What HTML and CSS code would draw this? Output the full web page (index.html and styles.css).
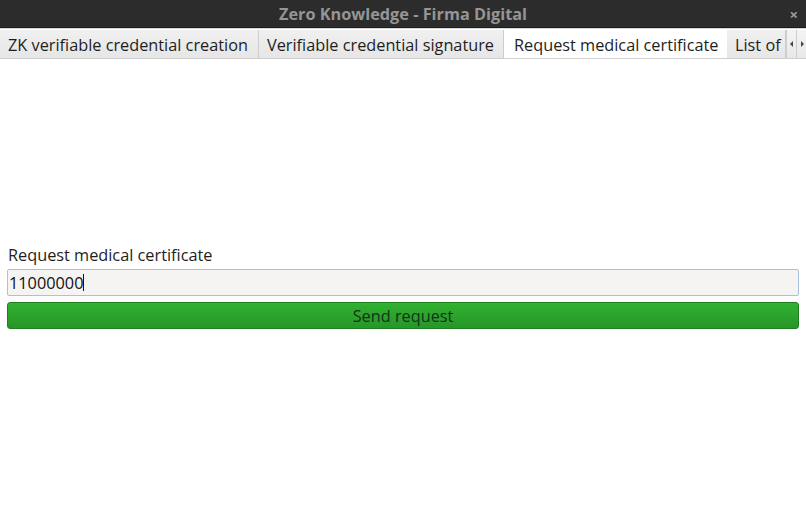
FILE: index.html
```html
<!DOCTYPE html>
<html>
<head>
<meta charset="utf-8">
<link rel="stylesheet" href="styles.css">
</head>
<body>
<div class="window">
  <div class="titlebar">
    <span class="title">Zero Knowledge - Firma Digital</span>
    <span class="close">×</span>
  </div>
  <div class="tabbar">
    <div class="tab t1">ZK verifiable credential creation</div>
    <div class="tab t2">Verifiable credential signature</div>
    <div class="tab t3 active">Request medical certificate</div>
    <div class="tab t4">List of</div>
    <div class="arrow">
      <svg width="6" height="8" viewBox="0 0 6 8"><path d="M4 1 L1 4 L4 7 Z" fill="#444"/></svg>
    </div>
    <div class="arrow">
      <svg width="6" height="8" viewBox="0 0 6 8"><path d="M2 1 L5 4 L2 7 Z" fill="#444"/></svg>
    </div>
  </div>
  <div class="content">
    <div class="label">Request medical certificate</div>
    <div class="input"><span>11000000</span><span class="caret"></span></div>
    <div class="button">Send request</div>
  </div>
</div>
</body>
</html>
```
FILE: styles.css
```css
html, body {
  margin: 0;
  padding: 0;
  background: #ffffff;
  font-family: "Open Sans", "Noto Sans", sans-serif;
}
.window {
  width: 806px;
  height: 508px;
  display: flex;
  flex-direction: column;
  background: #fff;
}
.titlebar {
  height: 28px;
  background: #2c2c2c;
  border-bottom: 1px solid #1c1c1c;
  display: flex;
  align-items: center;
  justify-content: center;
  position: relative;
  box-sizing: border-box;
}
.title {
  color: #959595;
  font-weight: bold;
  font-size: 16.3px;
}
.close {
  position: absolute;
  right: 8px;
  top: 4px;
  color: #9a9a9a;
  font-size: 15px;
  font-weight: bold;
}
.tabbar {
  height: 31px;
  display: flex;
  align-items: stretch;
  border-top: 1px solid #d8d8d8;
  border-bottom: 1px solid #cfcfcf;
  box-sizing: border-box;
  background: #ffffff;
  overflow: hidden;
}
.tab {
  display: flex;
  align-items: center;
  font-size: 16.3px;
  color: #1e1e1e;
  background: linear-gradient(#f0f0f0, #e6e6e6);
  border-right: 1px solid #cdcdcd;
  box-sizing: border-box;
  white-space: nowrap;
  overflow: hidden;
  padding-left: 8px;
  padding-top: 1px;
  margin-top: 1px;
}
.t1 { width: 259px; }
.t2 { width: 245px; }
.t3 { width: 223px; }
.t4 { width: 59px; }
.tab.active {
  background: #ffffff;
  margin-top: 0;
  margin-bottom: -1px;
  border-right: none;
  padding-left: 10px;
}
.arrow {
  width: 10px;
  display: flex;
  align-items: center;
  justify-content: center;
  background: linear-gradient(#f4f4f4, #e8e8e8);
  border-left: 1px solid #cdcdcd;
  box-sizing: border-box;
  margin-top: 1px;
}
.content {
  flex: 1;
  display: flex;
  flex-direction: column;
  padding: 185px 7px 0 7px;
}
.label {
  font-size: 16.3px;
  color: #1e1e1e;
  padding-left: 1px;
  height: 22px;
  line-height: 22px;
}
.input {
  margin-top: 3px;
  height: 27px;
  box-sizing: border-box;
  border: 1px solid #a9c1dc;
  border-radius: 2px;
  background: #f5f4f3;
  display: flex;
  align-items: center;
  font-size: 16.3px;
  color: #111;
  padding-left: 1px;
}
.caret {
  width: 1px;
  height: 17px;
  background: #111;
}
.button {
  margin-top: 6px;
  height: 27px;
  box-sizing: border-box;
  border: 1px solid #1f7f1f;
  border-radius: 3px;
  background: linear-gradient(#31b131, #279627);
  display: flex;
  align-items: center;
  justify-content: center;
  font-size: 16.3px;
  color: #14301a;
}
```
